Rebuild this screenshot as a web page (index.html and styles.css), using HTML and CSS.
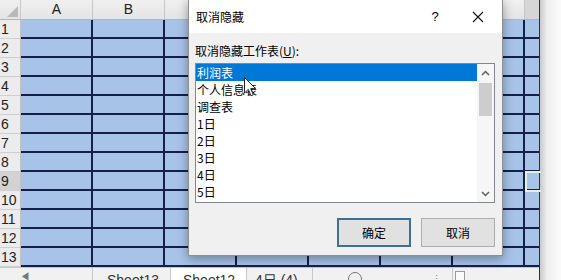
FILE: index.html
```html
<!DOCTYPE html>
<html lang="zh">
<head>
<meta charset="utf-8">
<link rel="stylesheet" href="styles.css">
</head>
<body>
<div class="screen">
  <div class="sheet">
    <div class="colhead">
      <div class="corner"><span class="tri"></span></div>
      <div class="ch">A</div>
      <div class="ch">B</div>
      <div class="ch"></div>
      <div class="ch"></div>
      <div class="ch"></div>
      <div class="ch"></div>
      <div class="ch"></div>
      <div class="ch ch-last"></div>
    </div>
    <div class="body">
      <div class="rowheads">
        <div class="rh">1</div>
        <div class="rh">2</div>
        <div class="rh">3</div>
        <div class="rh">4</div>
        <div class="rh">5</div>
        <div class="rh">6</div>
        <div class="rh">7</div>
        <div class="rh">8</div>
        <div class="rh rh-active">9</div>
        <div class="rh">10</div>
        <div class="rh">11</div>
        <div class="rh">12</div>
        <div class="rh">13</div>
      </div>
      <div class="cells"></div>
    </div>
    <div class="tabs">
      <div class="tab-nav"><span class="nav-arrow">◀</span></div>
      <div class="tab">Sheet13</div>
      <div class="tab tab-active">Sheet12</div>
      <div class="tab tab-small">4日 (4)</div>
      <div class="tab-tools">
        <span class="addbtn"></span>
        <span class="dots">⋮</span>
      </div>
      <div class="hscroll"><span class="hbox"></span></div>
    </div>
  </div>
  <div class="edge"></div>

  <div class="activecell"></div>

  <div class="dialog">
    <div class="titlebar">
      <span class="title">取消隐藏</span>
      <span class="help">?</span>
      <span class="close">
        <svg width="12" height="12" viewBox="0 0 12 12"><path d="M1 1 L11 11 M11 1 L1 11" stroke="#111" stroke-width="1.1" fill="none"/></svg>
      </span>
    </div>
    <div class="content">
      <div class="label">取消隐藏工作表(<u>U</u>):</div>
      <div class="listbox">
        <div class="items">
          <div class="item item-sel">利润表</div>
          <div class="item">个人信息表</div>
          <div class="item">调查表</div>
          <div class="item">1日</div>
          <div class="item">2日</div>
          <div class="item">3日</div>
          <div class="item">4日</div>
          <div class="item">5日</div>
        </div>
        <div class="vscroll">
          <div class="sbtn">
            <svg width="9" height="6" viewBox="0 0 9 6"><path d="M1 5 L4.5 1.5 L8 5" stroke="#606060" stroke-width="1.5" fill="none"/></svg>
          </div>
          <div class="track"><div class="thumb"></div></div>
          <div class="sbtn">
            <svg width="9" height="6" viewBox="0 0 9 6"><path d="M1 1 L4.5 4.5 L8 1" stroke="#606060" stroke-width="1.5" fill="none"/></svg>
          </div>
        </div>
      </div>
      <div class="buttons">
        <button class="btn btn-default">确定</button>
        <button class="btn">取消</button>
      </div>
    </div>
  </div>

  <svg class="cursor" width="13" height="20" viewBox="0 0 13 20">
    <path d="M0.5 0.5 L0.5 16 L4.3 12.4 L7 18.8 L9.3 17.8 L6.7 11.6 L11.6 11.6 Z" fill="#fff" stroke="#222" stroke-width="1"/>
  </svg>
</div>
</body>
</html>
```

FILE: styles.css
```css
* { box-sizing: border-box; }
html, body { margin: 0; padding: 0; background: #fff; }
.screen {
  position: relative;
  width: 561px;
  height: 280px;
  overflow: hidden;
  display: flex;
  font-family: "Noto Sans CJK SC", "Liberation Sans", sans-serif;
}
.sheet {
  width: 540px;
  display: flex;
  flex-direction: column;
  border-right: 1px solid #2a2f3a;
}
.colhead {
  display: flex;
  height: 20px;
  background: linear-gradient(#f0f0f0, #e4e4e4);
  border-bottom: 1px solid #b5b5b5;
}
.corner {
  width: 21px;
  position: relative;
  border-right: 1px solid #c8c8c8;
}
.tri {
  position: absolute;
  right: 2px;
  bottom: 2px;
  width: 0;
  height: 0;
  border-left: 11px solid transparent;
  border-bottom: 11px solid #b9b9b9;
}
.ch {
  width: 72px;
  border-right: 1px solid #c6c6c6;
  text-align: center;
  font: 14px/19px "Liberation Sans", sans-serif;
  color: #222;
}
.ch-last {
  width: 14px;
  border-right: none;
  background: #d6d6d6;
}
.body {
  display: flex;
  height: 247px;
}
.rowheads {
  width: 21px;
  display: flex;
  flex-direction: column;
  background: #ececec;
  border-right: 1px solid #c2c2c2;
}
.rh {
  height: 19px;
  border-bottom: 1px solid #cfcfcf;
  font: 14px/19px "Liberation Sans", sans-serif;
  color: #222;
  padding-left: 1px;
}
.rh-active { background: #d2d2d2; }
.cells {
  flex: 1;
  background-color: #a7c3e7;
  background-image:
    repeating-linear-gradient(to right, transparent 0 70px, #15204a 70px 72px),
    repeating-linear-gradient(to bottom, transparent 0 17px, #15204a 17px 19px);
}
.tabs {
  height: 13px;
  display: flex;
  background: #f1f1f1;
  border-top: 1px solid #c6c6c6;
  font: 14px/16px "Liberation Sans", sans-serif;
  color: #333;
}
.tab-nav {
  width: 93px;
  border-right: 1px solid #c8c8c8;
  padding-left: 20px;
  padding-top: 3px;
  font-size: 10px;
  line-height: 12px;
  color: #777;
}
.tab {
  padding: 4px 0 0 14px;
  width: 78px;
  border-right: 1px solid #c8c8c8;
}
.tab-active {
  background: #fff;
  width: 76px;
  padding-left: 12px;
}
.tab-small {
  width: 66px;
  padding-left: 8px;
}
.tab-tools {
  width: 140px;
  position: relative;
  border-right: 1px solid #c8c8c8;
}
.addbtn {
  position: absolute;
  left: 35px;
  top: 4px;
  width: 14px;
  height: 14px;
  border: 1.5px solid #777;
  border-radius: 50%;
}
.dots {
  position: absolute;
  left: 118px;
  top: 3px;
  font-size: 11px;
  color: #888;
}
.hscroll {
  flex: 1;
  padding: 3px 0 0 2px;
}
.hbox {
  display: block;
  width: 10px;
  height: 12px;
  border: 1px solid #9a9a9a;
  background: #fafafa;
}
.edge {
  flex: 1;
  background: linear-gradient(to right, #c9c9c9, #efefef 35%, #fbfbfb);
}
.activecell {
  position: absolute;
  left: 525px;
  top: 171px;
  width: 16px;
  height: 21px;
  border: 2px solid #e4f0e2;
  border-right: none;
}
.dialog {
  position: absolute;
  left: 188px;
  top: -1px;
  width: 315px;
  height: 257px;
  background: #f0f0f0;
  border: 1px solid #8f8f8f;
  box-shadow: 0 3px 10px rgba(0, 0, 0, 0.35);
  display: flex;
  flex-direction: column;
  color: #000;
  font-size: 12px;
}
.titlebar {
  height: 33px;
  background: #fff;
  display: flex;
  align-items: center;
  padding: 1px 0 0 7px;
}
.title { flex: 1; line-height: 16px; }
.help {
  width: 14px;
  margin-right: 30px;
  font: 13px/16px "Liberation Sans", sans-serif;
  text-align: center;
}
.close {
  width: 12px;
  height: 12px;
  margin-right: 18px;
  display: flex;
}
.content {
  flex: 1;
  padding: 10px 7px 0 6px;
  display: flex;
  flex-direction: column;
}
.label {
  line-height: 16px;
  height: 16px;
}
.label u { text-underline-offset: 1px; }
.listbox {
  margin-top: 4px;
  width: 300px;
  height: 140px;
  background: #fff;
  border: 1px solid #828790;
  display: flex;
}
.items {
  flex: 1;
  display: flex;
  flex-direction: column;
}
.item {
  height: 17px;
  line-height: 17px;
  padding-left: 1px;
  white-space: nowrap;
}
.item-sel {
  background: #0078d7;
  color: #fff;
}
.vscroll {
  width: 17px;
  display: flex;
  flex-direction: column;
  background: #f6f6f6;
}
.sbtn {
  height: 17px;
  display: flex;
  align-items: center;
  justify-content: center;
}
.track {
  flex: 1;
  padding: 2px 2px 0 2px;
}
.thumb {
  height: 33px;
  background: #cdcdcd;
}
.buttons {
  margin-top: 15px;
  display: flex;
  justify-content: flex-end;
  gap: 10px;
  width: 300px;
}
.btn {
  width: 74px;
  height: 29px;
  background: #e1e1e1;
  border: 1px solid #adadad;
  font-family: "Noto Sans CJK SC", sans-serif;
  font-size: 12px;
  color: #000;
  padding: 0;
}
.btn-default {
  border: 2px solid #3f6f98;
}
.cursor {
  position: absolute;
  left: 244px;
  top: 77px;
}
```
